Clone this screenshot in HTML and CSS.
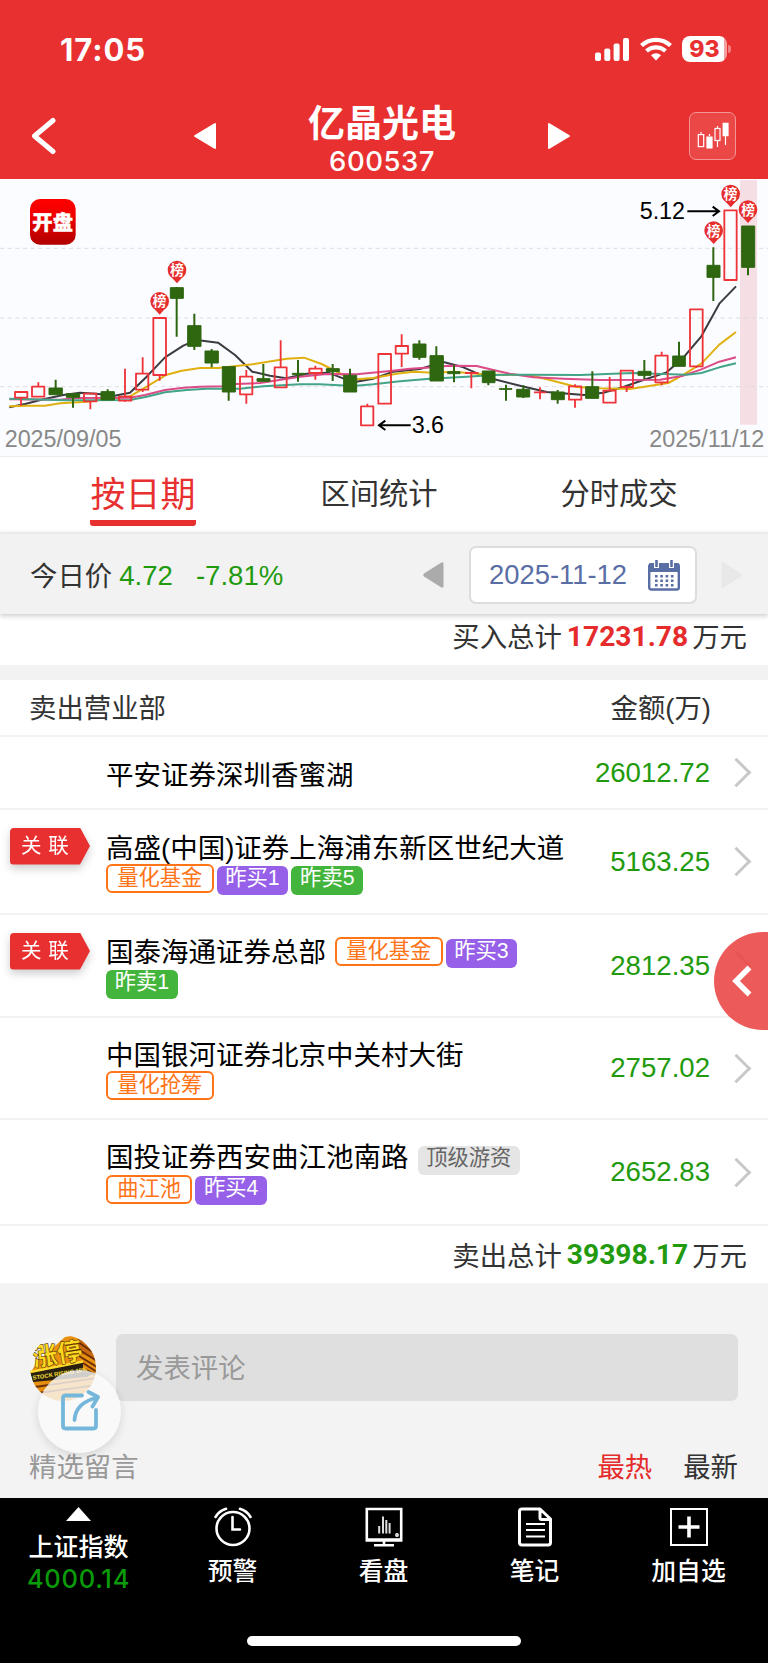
FILE: index.html
```html
<!DOCTYPE html>
<html lang="zh-CN">
<head>
  <meta charset="UTF-8" />
  <meta name="viewport" content="width=device-width, initial-scale=1.0"/>
  <title>亿晶光电 600537</title>
  <link rel="stylesheet" href="styles.css">
</head>
<body>
  <header>
    <div class="status">
      <span class="time">17:05</span>
      <svg class="signal" width="34" height="23" viewBox="0 0 34 23" fill="#fff">
        <rect x="0" y="14.5" width="6" height="8.5" rx="2"/><rect x="9.3" y="10.5" width="6" height="12.5" rx="2"/><rect x="18.6" y="5.5" width="6" height="17.5" rx="2"/><rect x="28" y="0" width="6" height="23" rx="2"/>
      </svg>
      <svg class="wifi" width="32" height="24" viewBox="0 0 32 24" fill="none" stroke="#fff" stroke-width="4.2">
        <path d="M1.5 8.6a21 21 0 0 1 29 0"/><path d="M6.5 14a14 14 0 0 1 19 0"/><path d="M11 18.2a7.5 7.5 0 0 1 10 0L16 23.4z" fill="#fff" stroke="none"/>
      </svg>
      <span class="battery">93</span>
    </div>
    <nav class="titlebar">
      <svg class="back" width="25" height="38" viewBox="0 0 25 38" fill="none" stroke="#fff" stroke-width="5" stroke-linecap="round" stroke-linejoin="round"><path d="M22 3.5 3.5 19 22 34.5"/></svg>
      <svg class="prev" width="24" height="28" viewBox="0 0 24 28" fill="#fff" stroke="#fff" stroke-width="2" stroke-linejoin="round"><path d="M2 14 22 2v24z"/></svg>
      <div class="stock">
        <h1>亿晶光电</h1>
        <span>600537</span>
      </div>
      <svg class="next" width="24" height="28" viewBox="0 0 24 28" fill="#fff" stroke="#fff" stroke-width="2" stroke-linejoin="round"><path d="M22 14 2 2v24z"/></svg>
      <div class="kline">
        <svg width="32" height="28" viewBox="0 0 32 28" fill="none" stroke="#fff" stroke-width="1.2">
          <path d="M4 10v3M12.5 12v2M20.5 4v3M20.5 19v6M28.5 14v9"/>
          <rect x="1.3" y="12.6" width="5.4" height="12"/><rect x="18" y="6.5" width="5" height="12"/>
          <path d="M9.4 14.5h6.2v12H9.4zM25.6.8h6v13.5h-6z" fill="#fff" stroke="none"/>
        </svg>
      </div>
    </nav>
  </header>

  <section class="chart">
    <svg width="768" height="277" viewBox="0 12 2304 831">
      <defs>
        <linearGradient id="logo" x1="0" y1="0" x2="0" y2="1"><stop offset="0" stop-color="#ff0000"/><stop offset=".4" stop-color="#ee0000"/><stop offset="1" stop-color="#b00000"/></linearGradient>
        <g id="pin"><path d="M-20 18 0 40 20 18z"/><circle r="28"/><text y="15">榜</text></g>
      </defs>
      <rect class="today" x="2220" y="15" width="51" height="734"/>
      <path class="grid" d="M0 220H2304M0 429H2304M0 635H2304"/>
      <rect x="90" y="72" width="137" height="137" rx="30" fill="url(#logo)"/>
      <text class="logo-text" x="158" y="166">开盘</text>

      <path class="ma5" d="M28 697 75 687 130 673 190 660 240 653 290 656 340 663 390 653 440 605 495 547 550 512 590 495 654 503 705 540 757 590 810 602 858 610 920 596 985 593 1060 622 1120 611 1180 590 1260 582 1330 561 1385 575 1425 592 1480 612 1560 632 1640 651 1752 660 1810 653 1870 636 1930 615 2000 592 2050 548 2104 484 2158 386 2208 334"/>
      <path class="ma10" d="M28 694 80 692 135 692 180 685 260 680 390 664 440 635 500 599 545 587 600 579 655 579 757 568 860 551 912 548 965 567 1030 600 1070 613 1120 609 1190 596 1240 590 1300 593 1360 590 1450 598 1590 601 1650 615 1730 636 1800 640 1890 642 2005 624 2052 598 2104 566 2158 509 2208 471"/>
      <path class="ma20" d="M28 673 180 674 230 669 390 668 435 660 495 645 550 638 600 635 670 634 710 627 780 624 900 605 980 597 1070 598 1170 588 1230 581 1300 577 1345 572 1430 573 1480 585 1530 596 1600 607 1690 611 1800 615 1980 614 2050 602 2104 583 2158 560 2208 547"/>
      <path class="ma60" d="M28 671 200 676 390 675 440 665 495 652 560 645 620 641 720 641 790 634 900 628 960 628 1060 633 1120 628 1200 619 1290 611 1400 605 1480 600 1580 599 1740 600 1900 594 2060 599 2104 594 2158 577 2208 565"/>

      <g class="up">
        <path d="M63 648v3M63 668v24M115 622v13M271 679v24M375 581v84M375 677v3M428 547v49M428 644v7M479 600v17M739 585v20M739 658v28M842 496v81M946 572v9M946 594v20M1102 686v8M1205 478v35M1205 536v40M1414 590v50M1620 637v36M1395 594h40M1602 652h37M1725 628v6M1725 674v24M1829 606v41M1880 636v15M1985 530v12M1985 622v9M2089 574v5"/>
        <rect x="45" y="651" width="37" height="17"/><rect x="96" y="635" width="37" height="30"/><rect x="252" y="656" width="37" height="23"/><rect x="357" y="665" width="37" height="12"/>
        <rect x="408" y="596" width="37" height="48"/><rect x="460" y="429" width="38" height="171"/><rect x="720" y="605" width="37" height="53"/><rect x="824" y="577" width="36" height="60"/>
        <rect x="928" y="581" width="37" height="13"/><rect x="1083" y="694" width="37" height="57"/><rect x="1135" y="537" width="38" height="149"/><rect x="1187" y="513" width="37" height="23"/>
        <rect x="1707" y="634" width="37" height="40"/><rect x="1810" y="647" width="37" height="36"/><rect x="1862" y="587" width="37" height="49"/><rect x="1966" y="542" width="37" height="80"/>
        <rect x="2070" y="403" width="38" height="171"/><rect x="2173" y="106" width="37" height="209"/>
      </g>
      <g class="down">
        <path d="M167 614v40M219 654v44M323 643v20M530 336v149M583 416v109M635 522v55M686 600v77M790 567v50M894 555v65M998 567v51M1050 581v50M1258 496v58M1309 514v50M1362 571v51M1465 600v31M1518 629v48M1570 631v38M1673 645v41M1777 589v70M1933 555v58M2037 500v60M2140 217v161M2244 200v101"/>
        <rect x="147" y="639" width="40" height="20"/><rect x="199" y="656" width="40" height="11"/><rect x="303" y="650" width="40" height="25"/><rect x="511" y="338" width="39" height="32"/>
        <rect x="563" y="452" width="40" height="62"/><rect x="615" y="528" width="40" height="36"/><rect x="667" y="575" width="39" height="76"/><rect x="771" y="611" width="39" height="8"/>
        <rect x="877" y="595" width="36" height="4"/><rect x="979" y="581" width="39" height="9"/><rect x="1031" y="601" width="39" height="50"/><rect x="1239" y="507" width="39" height="40"/>
        <rect x="1290" y="542" width="40" height="76"/><rect x="1343" y="590" width="37" height="6"/><rect x="1447" y="588" width="38" height="35"/><rect x="1498" y="641" width="38" height="2"/>
        <rect x="1550" y="643" width="39" height="23"/><rect x="1654" y="651" width="39" height="23"/><rect x="1757" y="635" width="39" height="35"/><rect x="1914" y="589" width="39" height="12"/>
        <rect x="2018" y="543" width="38" height="31"/><rect x="2121" y="271" width="39" height="36"/><rect x="2225" y="153" width="39" height="124"/>
      </g>
      <g class="pins">
        <use href="#pin" x="479" y="379"/><use href="#pin" x="531" y="285"/><use href="#pin" x="2141" y="167"/><use href="#pin" x="2192" y="57"/><use href="#pin" x="2244" y="104"/>
      </g>
      <path class="arrow" d="M2062 109H2156M2138 95 2157 109 2138 123M1232 751H1138M1156 737 1137 751 1156 765"/>
      <text class="price" x="1919" y="132">5.12</text>
      <text class="price" x="1235" y="773">3.6</text>
      <text class="date" x="14" y="817">2025/09/05</text>
      <text class="date" x="2293" y="817" text-anchor="end">2025/11/12</text>
    </svg>
  </section>

  <nav class="tabs">
    <a class="active">按日期</a>
    <a>区间统计</a>
    <a>分时成交</a>
  </nav>

  <div class="filter">
    <span>今日价</span>
    <span class="green now">4.72</span>
    <span class="green">-7.81%</span>
    <svg class="day-prev" width="21" height="26" viewBox="0 0 21 26" fill="#ababab"><path d="M1 11.5 18 .8q2.500-1.300 2.500 1v22.400q0 2.300-2.500 1L1 14.500q-1.500-1.500 0-3z"/></svg>
    <div class="datebox">
      <span>2025-11-12</span>
      <svg width="32" height="31" viewBox="0 0 32 31">
        <rect x="1.2" y="4.2" width="29.6" height="25.3" rx="2" fill="#fff" stroke="#5a6ea6" stroke-width="2.4"/>
        <path d="M1 3.5h30V12H1z" fill="#5a6ea6"/>
        <path d="M8.5 0v8M23.5 0v8" stroke="#fff" stroke-width="5"/><path d="M8.5 0v7M23.5 0v7" stroke="#5a6ea6" stroke-width="2.6"/>
        <path d="M7 16.2h19M7 20.7h19M7 25.2h19" stroke="#5a6ea6" stroke-width="2.6" stroke-dasharray="2.6 2.7"/>
      </svg>
    </div>
    <svg class="day-next" width="21" height="26" viewBox="0 0 21 26" fill="#e8e8e8"><path d="M20 11.5 3 .8Q.5-.5.5 1.800v22.400q0 2.300 2.500 1l17-10.700q1.500-1.500 0-3z"/></svg>
  </div>

  <div class="total buy">买入总计<b class="red">17231.78</b>万元</div>

  <section class="sell">
    <div class="sell-head"><span>卖出营业部</span><span>金额(万)</span></div>
    <div class="row single">
      <div class="name"><div class="line"><span class="title">平安证券深圳香蜜湖</span></div></div>
      <span class="amount">26012.72</span><i class="arrow-right"></i>
    </div>
    <div class="row r2">
      <div class="link"><span>关 联</span></div>
      <div class="name">
        <div class="line"><span class="title">高盛(中国)证券上海浦东新区世纪大道</span></div>
        <div class="line"><span class="tag orange">量化基金</span><span class="tag purple">昨买1</span><span class="tag sold">昨卖5</span></div>
      </div>
      <span class="amount">5163.25</span><i class="arrow-right"></i>
    </div>
    <div class="row r3">
      <div class="link"><span>关 联</span></div>
      <div class="name">
        <div class="line"><span class="title">国泰海通证券总部</span><span class="tag orange first">量化基金</span><span class="tag purple">昨买3</span></div>
        <div class="line"><span class="tag sold">昨卖1</span></div>
      </div>
      <span class="amount">2812.35</span><i class="arrow-right"></i>
    </div>
    <div class="row r4">
      <div class="name">
        <div class="line"><span class="title">中国银河证券北京中关村大街</span></div>
        <div class="line"><span class="tag orange">量化抢筹</span></div>
      </div>
      <span class="amount">2757.02</span><i class="arrow-right"></i>
    </div>
    <div class="row r5">
      <div class="name">
        <div class="line"><span class="title">国投证券西安曲江池南路</span><span class="tag gray first">顶级游资</span></div>
        <div class="line"><span class="tag orange">曲江池</span><span class="tag purple">昨买4</span></div>
      </div>
      <span class="amount">2652.83</span><i class="arrow-right"></i>
    </div>
    <div class="total">卖出总计<b class="green">39398.17</b>万元</div>
  </section>

  <section class="comments">
    <div class="write">
      <svg class="avatar" width="68" height="68" viewBox="0 0 68 68">
        <defs><clipPath id="round"><circle cx="34" cy="34" r="33"/></clipPath></defs>
        <circle cx="34" cy="34" r="33" fill="#f5f5f5"/>
        <g clip-path="url(#round)">
          <path d="M36 3 48 1 68 16V68H12L4 50 2 38 8 28z" fill="#e8900f"/>
          <path d="M48 1 68 15v12L50 18z" fill="#c96a10"/>
          <path d="M49 8 68 21M49 15 68 27M50 22 68 33M54 29 68 38M56 35 68 42M6 53 68 44M9 59 68 51" stroke="#6b2e08" stroke-width="1.8"/>
          <path d="M1 38 54 27 54 36 65 39 58 43 4 48z" fill="#29200f"/>
          <path d="M1 38 54 27.5" stroke="#ffdc2e" stroke-width="2.4"/>
          <g transform="rotate(-9 30 24)"><text class="avatar-big" x="4" y="29">涨停</text><text class="avatar-small" x="1" y="41.5">STOCK RISING 10%</text></g>
        </g>
      </svg>
      <div class="input">发表评论</div>
    </div>
    <div class="sort"><span>精选留言</span><span class="red">最热</span><span class="newest">最新</span></div>
    <div class="share">
      <svg width="40" height="42" viewBox="0 0 40 42" fill="none" stroke="#75b7da" stroke-width="3.8" stroke-linecap="round" stroke-linejoin="round">
        <path d="M22 5.5H5.500Q3 5.500 3 8v28q0 2.500 2.500 2.500h28Q36 38.500 36 36V20"/><path d="M14.500 30Q15.500 13 37 7.500M28.500 2 38 7l-5.500 9.500"/>
      </svg>
    </div>
  </section>

  <footer>
    <div class="item index">
      <svg width="25" height="14" viewBox="0 0 25 14" fill="#fff"><path d="M12.5 0 25 14H0z"/></svg>
      <span>上证指数</span>
      <b>4000.14</b>
    </div>
    <div class="item">
      <svg width="38" height="40" viewBox="0 0 38 40" fill="none" stroke="#fff" stroke-width="2.6" stroke-linecap="round"><circle cx="19" cy="21.5" r="16.5"/><path d="M18.5 10v12.500h7.500M1.500 10Q5 4 12 1.800M36.500 10Q33 4 26 1.800"/></svg>
      <span>预警</span>
    </div>
    <div class="item">
      <svg width="38" height="40" viewBox="0 0 38 40" fill="none" stroke="#fff" stroke-width="2.6"><path d="M1.800 2H36.200V33.500H1.800zM9 38.200h20M19 34v4M2 32.500h34"/><path d="M14.200 19v7.500M18 9.500v17M21.300 13v13.500M24.600 16v10.500" stroke-width="2" stroke="#ddd"/><circle cx="32" cy="28" r="1.2" stroke-width="1.4"/></svg>
      <span>看盘</span>
    </div>
    <div class="item">
      <svg width="34" height="40" viewBox="0 0 34 40" fill="none" stroke="#fff" stroke-width="3" stroke-linejoin="round"><path d="M22 2H4Q1.500 2 1.500 4.500v31Q1.500 38 4 38h26q2.500 0 2.500-2.500V12zM22 2v9q0 1.500 1.500 1.500h9"/><path d="M8 17h19M8 23h19M8 29.500h19" stroke-width="2.2"/></svg>
      <span>笔记</span>
    </div>
    <div class="item">
      <svg width="38" height="40" viewBox="0 0 38 40" fill="none" stroke="#fff" stroke-width="2"><path d="M1 2h36v36H1z"/><path d="M8.500 20h21M19 9.500v21" stroke-width="3.6"/></svg>
      <span>加自选</span>
    </div>
    <div class="home"></div>
  </footer>

  <div class="drawer">
    <svg width="20" height="32" viewBox="0 0 20 32" fill="none" stroke="#fff" stroke-width="5.5"><path d="M17.500 2.500 4 16l13.500 13.500"/></svg>
  </div>
</body>
</html>
```
FILE: styles.css
```css
* {
  box-sizing: border-box;
}
body {
  margin: 0;
  position: relative;
  width: 768px;
  height: 1663px;
  overflow: hidden;
  background: #fff;
  color: #333;
  font-family: "Liberation Sans", "Noto Sans CJK SC", sans-serif;
  font-size: 27.4px;
}
svg {
  display: block;
  flex: none;
}
.red {
  color: #e52b2b;
}
.green {
  color: #229a0e;
}

/* header */
header {
  height: 179px;
  background: #e83030;
  color: #fff;
}
.status {
  display: flex;
  align-items: center;
  height: 98px;
  padding: 0 37px 0 60px;
}
.time {
  font: bold 31px/1 Inter, sans-serif;
  letter-spacing: 0.9px;
  margin-right: auto;
}
.wifi {
  margin: 0 10px 0 11px;
}
.battery {
  width: 45px;
  height: 26px;
  margin-right: 4px;
  border-radius: 8px;
  background: linear-gradient(90deg, #fff 93%, #f4a0a0 93%);
  color: #e83030;
  font: 800 23px/26px Inter, sans-serif;
  text-align: center;
  position: relative;
}
.battery::after {
  content: "";
  position: absolute;
  right: -4px;
  top: 9px;
  width: 3px;
  height: 8px;
  border-radius: 0 3px 3px 0;
  background: #f08080;
}
.titlebar {
  display: flex;
  align-items: center;
  height: 76px;
  padding: 0 32px 0 31px;
}
.prev {
  margin-left: 137px;
}
.stock {
  width: 330px;
  padding-top: 6px;
  text-align: center;
}
.stock h1 {
  margin: 0;
  font-size: 37px;
  line-height: 44px;
  font-weight: bold;
}
.stock span {
  display: block;
  font: 500 27.5px/28px Inter, sans-serif;
  letter-spacing: 0.5px;
}
.kline {
  display: flex;
  align-items: center;
  justify-content: center;
  width: 47px;
  height: 48px;
  margin-left: auto;
  border: 1px solid #f39595;
  border-radius: 7px;
  background: #ec4747;
}

/* chart */
.chart {
  height: 278px;
  background: #fbfcff;
  border-bottom: 1px solid #ececec;
}
.today {
  fill: #f6dee5;
}
.grid {
  stroke: #dddde3;
  stroke-width: 3;
  stroke-dasharray: 12 11;
}
.ma5, .ma10, .ma20, .ma60 {
  fill: none;
  stroke-width: 6;
  stroke-linejoin: round;
}
.ma5 {
  stroke: #3b3b40;
}
.ma10 {
  stroke: #e0b010;
}
.ma20 {
  stroke: #da4b88;
}
.ma60 {
  stroke: #43a487;
}
.up {
  fill: none;
  stroke: #ee3439;
  stroke-width: 5.5;
  stroke-linejoin: round;
}
.down {
  fill: #2e6710;
  stroke: #2e6710;
  stroke-width: 6;
  stroke-linejoin: round;
}
.down rect {
  stroke-width: 3;
}
.pins {
  fill: #e62e2e;
}
#pin text {
  fill: #fff;
  font-size: 41px;
  font-weight: bold;
  text-anchor: middle;
}
.logo-text {
  fill: #fff;
  stroke: #fff;
  stroke-width: 1;
  font-size: 61px;
  font-weight: 900;
  text-anchor: middle;
}
.arrow {
  fill: none;
  stroke: #000;
  stroke-width: 6;
}
.price {
  fill: #000;
  font-size: 70px;
}
.date {
  fill: #888;
  font-size: 70px;
}

/* tabs */
.tabs {
  display: grid;
  grid-template-columns: 238px 234px 246px;
  height: 75px;
  padding-left: 24px;
  justify-items: center;
}
.tabs a {
  font-size: 29.3px;
  line-height: 73px;
}
.tabs .active {
  color: #e83030;
  font-size: 35px;
  height: 69px;
  line-height: 76px;
  border-bottom: 6px solid #e83030;
  border-radius: 3px;
}
.filter {
  display: flex;
  align-items: center;
  position: relative;
  height: 82px;
  padding: 2px 26px 0 30px;
  background: #f2f2f2;
  border-top: 2px solid #ebebeb;
  box-shadow: 0 2px 5px rgba(0, 0, 0, 0.2);
}
.filter > span:first-child {
  margin-top: -2px;
}
.filter .green {
  padding-top: 1px;
  font-size: 27.6px;
}
.now {
  margin: 0 23px 0 7px;
}
.day-prev {
  margin-left: auto;
}
.datebox {
  display: flex;
  align-items: center;
  justify-content: space-between;
  width: 228px;
  height: 58px;
  margin: 0 24px 0 25px;
  padding: 0 15px 0 18px;
  background: #fff;
  border: 2px solid #ddd;
  border-radius: 7px;
  color: #5a6ea6;
}

/* totals */
.total {
  display: flex;
  align-items: center;
  justify-content: flex-end;
  height: 57px;
  padding: 0 21px 2px 0;
}
.total b {
  margin: 0 4px 0 5px;
  font-family: Roboto, sans-serif;
  font-size: 28.2px;
  padding-top: 2px;
}
.buy {
  height: 51px;
  padding-bottom: 9px;
}

/* sell list */
.sell {
  border-top: 15px solid #f2f2f2;
}
.sell-head {
  display: flex;
  align-items: center;
  justify-content: space-between;
  height: 57px;
  padding: 0 57px 3px 29px;
  border-bottom: 2px solid #f2f2f2;
}
.row {
  display: flex;
  align-items: center;
  position: relative;
  height: 105px;
  padding: 0 21px 0 106px;
  border-bottom: 2px solid #f2f2f2;
}
.single {
  height: 73px;
}
.r3 {
  height: 103px;
}
.r4 {
  height: 102px;
}
.r5 {
  height: 106px;
}
.name {
  flex: 1;
  color: #000;
}
.line {
  display: flex;
  align-items: center;
  gap: 3px;
  height: 30px;
  white-space: nowrap;
}
.line + .line {
  margin-top: 1px;
}
.title {
  margin-top: -4px;
  font-size: 27.5px;
}
.single .line {
  margin-top: 4px;
}
.r2 .name, .r3 .name {
  padding-top: 3px;
}
.r4 .name {
  padding-top: 4px;
}
.r5 .name {
  padding-top: 3px;
}
.r5 .title {
  margin-top: -6px;
}
.amount {
  color: #229a0e;
  font-size: 27.6px;
}
.arrow-right {
  width: 21px;
  height: 21px;
  margin-left: 16px;
  border-top: 3px solid #c8c8c8;
  border-right: 3px solid #c8c8c8;
  transform: rotate(45deg);
}
.tag {
  height: 29px;
  margin-top: 3px;
  padding: 0 8.7px;
  border-radius: 6px;
  color: #fff;
  font-size: 21.3px;
  line-height: 25px;
}
.first {
  margin-left: 6px;
}
.orange {
  margin-top: 0;
  border: 2px solid #ff7417;
  color: #ff7417;
  background: #fff;
  padding: 0 9.2px;
  line-height: 24px;
}
.purple {
  background: #9660e8;
}
.sold {
  background: #44b53c;
}
.gray {
  margin-top: 5px;
  background: #e5e5e5;
  color: #666;
}
.link {
  position: absolute;
  left: 10px;
  top: 17.5px;
  filter: drop-shadow(0 4px 4px rgba(0, 0, 0, 0.2));
}
.link span {
  display: block;
  width: 80px;
  height: 37px;
  padding-left: 11px;
  border-radius: 4px 0 0 4px;
  background: #e83030;
  clip-path: polygon(0 0, 70px 0, 100% 50%, 70px 100%, 0 100%);
  color: #fff;
  font-size: 20.5px;
  line-height: 36px;
  letter-spacing: 0.5px;
}

/* comments */
.comments {
  position: relative;
  height: 215px;
  padding: 51px 30px 0 29px;
  background: #f3f3f3;
}
.write {
  display: flex;
}
.input {
  flex: 1;
  height: 67px;
  margin-left: 19px;
  padding-left: 20px;
  border-radius: 7px;
  background: #dfdfdf;
  color: #999;
  line-height: 69px;
}
.avatar-big {
  fill: #ffd91f;
  stroke: #4a2605;
  stroke-width: 0.5px;
  font-size: 25px;
  font-weight: 900;
}
.avatar-small {
  fill: #ffe03a;
  font-size: 5.8px;
  font-weight: bold;
}
.sort {
  display: flex;
  margin-top: 43px;
  color: #999;
}
.sort .red {
  margin-left: auto;
}
.newest {
  margin-left: 31px;
  color: #333;
}
.share {
  display: flex;
  align-items: center;
  justify-content: center;
  position: absolute;
  left: 38px;
  top: 87px;
  width: 83px;
  height: 83px;
  padding-bottom: 2px;
  border-radius: 50%;
  background: rgba(250, 250, 250, 0.8);
  box-shadow: 0 3px 10px rgba(0, 0, 0, 0.12);
}

/* bottom bar */
footer {
  display: grid;
  grid-template-columns: 157px 151px 151px 151px 157px;
  position: relative;
  height: 165px;
  background: #000;
  color: #fff;
}
.item {
  display: flex;
  flex-direction: column;
  align-items: center;
  padding-top: 9px;
  font-size: 24.8px;
  font-weight: 500;
}
.item span {
  margin-top: 6px;
  line-height: 37px;
}
.index span {
  margin-top: 8px;
  font-size: 25px;
}
.index b {
  margin-top: -3px;
  color: #0a9a0a;
  font: 500 25.5px/32px Inter, sans-serif;
  letter-spacing: 0.7px;
}
.home {
  position: absolute;
  left: 247px;
  bottom: 17px;
  width: 274px;
  height: 10px;
  border-radius: 5px;
  background: #fff;
}

.drawer {
  display: flex;
  align-items: center;
  position: absolute;
  right: 0;
  top: 932px;
  width: 54px;
  height: 98px;
  padding-left: 18px;
  border-radius: 49px 0 0 49px;
  background: rgba(234, 67, 67, 0.88);
}
```
